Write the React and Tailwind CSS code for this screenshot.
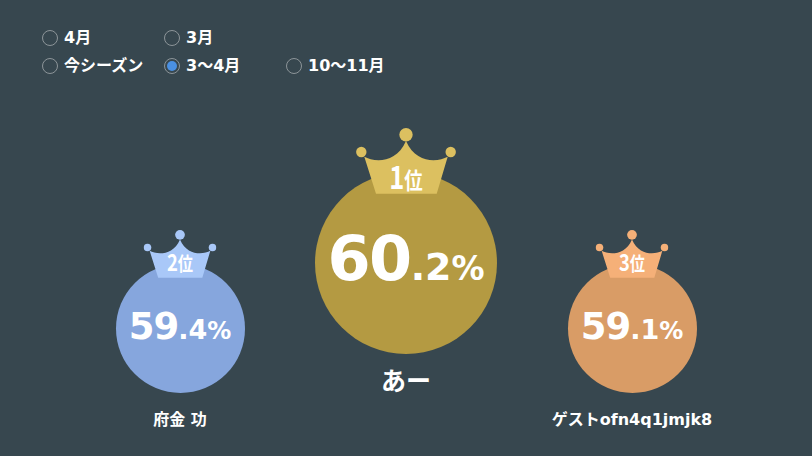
import React from "react";

const filters = [
  { label: "4月" },
  { label: "3月" },
  { label: "", empty: true },
  { label: "今シーズン" },
  { label: "3～4月", checked: true },
  { label: "10～11月" },
];

const ranks = [
  {
    rank: 2,
    name: "府金 功",
    whole: "59",
    rest: ".4",
    colClass: "pt-[184px]",
    circleClass: "w-[129px] h-[129px] bg-[#86a6dd]",
    crownClass: "w-[73px] h-[48px] -top-[34px]",
    crownFill: "#a9c8f8",
    rankClass: "top-[20px] text-[23px]",
    kanjiClass: "text-[19px]",
    wholeClass: "text-[37px] tracking-[-1px]",
    restClass: "text-[27px]",
    percentClass: "text-[24px]",
    numberClass: "pb-[5px]",
    nameClass: "mt-[16px] text-base leading-[22px]",
  },
  {
    rank: 1,
    name: "あー",
    whole: "60",
    rest: ".2",
    colClass: "pt-[92px]",
    circleClass: "w-[182px] h-[182px] bg-[#b49a42]",
    crownClass: "w-[100px] h-[66px] -top-[44px]",
    crownFill: "#dcc060",
    rankClass: "top-[31px] text-[32px]",
    kanjiClass: "text-[23px]",
    wholeClass: "text-[62px] tracking-[-1.5px]",
    restClass: "text-[38px]",
    percentClass: "text-[33px]",
    numberClass: "pb-[8px]",
    nameClass: "mt-[13px] text-[25px] leading-[30px]",
  },
  {
    rank: 3,
    name: "ゲストofn4q1jmjk8",
    whole: "59",
    rest: ".1",
    colClass: "pt-[184px]",
    circleClass: "w-[129px] h-[129px] bg-[#d99c66]",
    crownClass: "w-[73px] h-[48px] -top-[34px]",
    crownFill: "#f5b078",
    rankClass: "top-[20px] text-[23px]",
    kanjiClass: "text-[19px]",
    wholeClass: "text-[37px] tracking-[-1px]",
    restClass: "text-[27px]",
    percentClass: "text-[24px]",
    numberClass: "pb-[5px]",
    nameClass: "mt-[16px] text-base leading-[22px]",
  },
];

const Crown = ({ fill }) => (
  <svg viewBox="0 0 100 66" className="absolute inset-0 w-full h-full">
    <circle cx="50" cy="6.7" r="6.7" fill={fill} />
    <circle cx="5.3" cy="24" r="5.2" fill={fill} />
    <circle cx="94.7" cy="24" r="5.2" fill={fill} />
    <path
      d="M8.3 28.7C18 34 40 36 50 13C60 36 82 34 91.7 28.7L80.7 65.7L20 65.7Z"
      fill={fill}
    />
  </svg>
);

const RankCircle = ({ item }) => (
  <div className={`flex flex-col items-center ${item.colClass}`}>
    <div
      className={`relative rounded-full flex items-center justify-center ${item.circleClass}`}
    >
      <div className={`absolute left-1/2 -translate-x-1/2 ${item.crownClass}`}>
        <Crown fill={item.crownFill} />
        <div
          className={`absolute inset-x-0 flex items-baseline justify-center text-white font-bold leading-none scale-x-[0.8] font-['Noto_Sans_CJK_JP',sans-serif] ${item.rankClass}`}
        >
          {item.rank}
          <span className={item.kanjiClass}>位</span>
        </div>
      </div>
      <div
        className={`flex items-baseline text-white font-bold leading-none ${item.numberClass}`}
      >
        <span className={item.wholeClass}>{item.whole}</span>
        <span className={item.restClass}>{item.rest}</span>
        <span className={item.percentClass}>%</span>
      </div>
    </div>
    <div className={`text-white font-bold whitespace-nowrap ${item.nameClass}`}>
      {item.name}
    </div>
  </div>
);

export default function App() {
  return (
    <div className="w-[812px] h-[456px] overflow-hidden bg-[#37474f] font-['DejaVu_Sans','Noto_Sans_CJK_JP',sans-serif]">
      <div className="grid grid-cols-[122px_122px_122px] pl-[42px] pt-[24px]">
        {filters.map((f, i) =>
          f.empty ? (
            <div key={i} />
          ) : (
            <div key={i} className="flex items-center h-[28px] gap-[6px]">
              <span className="w-4 h-4 rounded-full border border-[#8d9599] flex items-center justify-center">
                {f.checked && (
                  <span className="w-[10px] h-[10px] rounded-full bg-[#4a90e2]" />
                )}
              </span>
              <span className="text-white text-base font-bold whitespace-nowrap">
                {f.label}
              </span>
            </div>
          ),
        )}
      </div>
      <div className="grid grid-cols-3 w-[678px] ml-[67px]">
        {ranks.map((r) => (
          <RankCircle key={r.rank} item={r} />
        ))}
      </div>
    </div>
  );
}
